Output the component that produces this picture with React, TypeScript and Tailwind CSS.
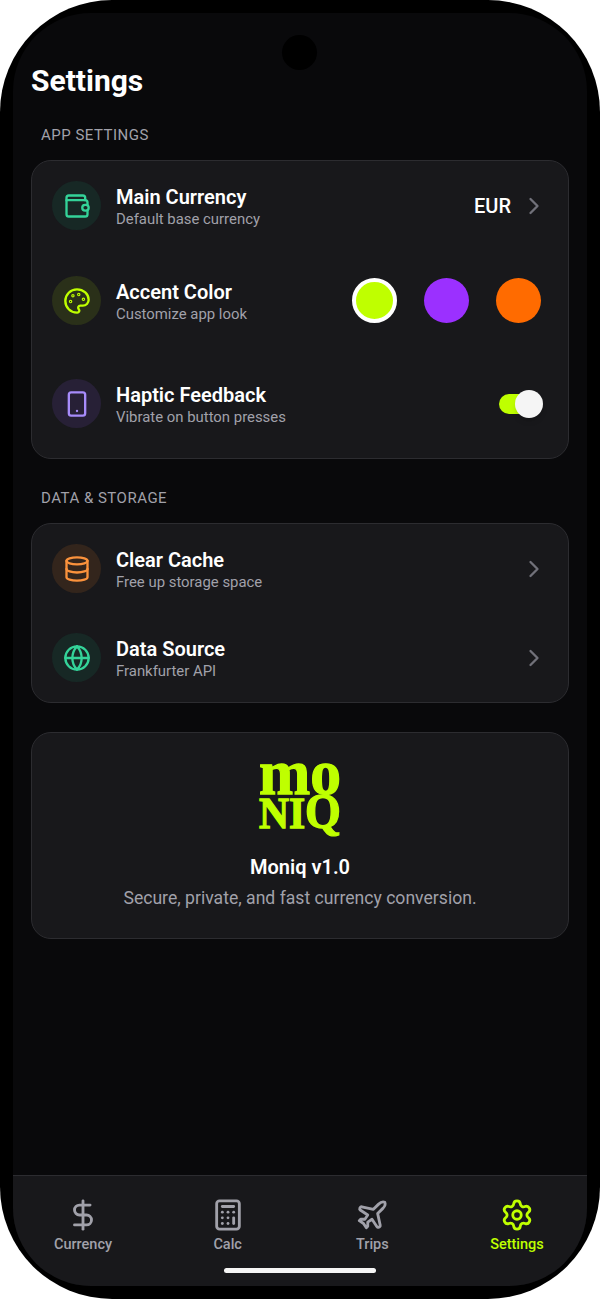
import React, { FC, ReactNode } from 'react';
import { Calculator, ChevronRight, Database, DollarSign, Globe, Palette, Plane, Settings, Smartphone } from 'lucide-react';

const WalletIcon = () => (
    <svg width="28" height="28" viewBox="0 0 24 24" fill="none" stroke="#34d399" strokeWidth="2" strokeLinecap="round" strokeLinejoin="round">
        <path d="M3 7h16a2 2 0 0 1 2 2v2" />
        <path d="M19 7V5a2 2 0 0 0-2-2H5a2 2 0 0 0-2 2v14a2 2 0 0 0 2 2h14a2 2 0 0 0 2-2v-3" />
        <rect x="16.5" y="11" width="5.5" height="5" rx="2.5" />
    </svg>
);

const Logo = () => (
    <svg
        className="overflow-visible"
        width="84"
        height="76"
        viewBox="0 0 84 76"
        fill="#bfff00"
        stroke="#bfff00"
        strokeWidth="1.3"
        fontFamily="'Liberation Serif', serif"
        fontWeight="700"
    >
        <text x="1" y="31" fontSize="64" textLength="82" lengthAdjust="spacingAndGlyphs">
            mo
        </text>
        <text x="1" y="65" fontSize="45" textLength="82" lengthAdjust="spacingAndGlyphs">
            NI<tspan fontSize="50">Q</tspan>
        </text>
    </svg>
);

interface RowProps {
    icon: ReactNode;
    iconBg: string;
    title: string;
    subtitle: string;
    className?: string;
    children?: ReactNode;
}
const Row: FC<RowProps> = ({ icon, iconBg, title, subtitle, className, children }) => (
    <div className={['flex items-center', className ?? ''].join(' ')}>
        <div className={['h-[49px] w-[49px] rounded-full flex items-center justify-center shrink-0', iconBg].join(' ')}>{icon}</div>
        <div className="ml-[15px] pt-[3px]">
            <div className="text-[20px] leading-[24px] font-semibold text-white">{title}</div>
            <div className="text-[14.9px] leading-[20px] text-[#a1a1aa]">{subtitle}</div>
        </div>
        <div className="ml-auto flex items-center">{children}</div>
    </div>
);

const Chevron = () => <ChevronRight size={28} color="#71717a" />;

const Label: FC<{ children: ReactNode }> = ({ children }) => (
    <div className="ml-[10px] text-[15px] leading-[20px] font-normal tracking-[0.5px] text-[#a1a1aa]">{children}</div>
);

const tabs = [
    { name: 'Currency', Icon: DollarSign },
    { name: 'Calc', Icon: Calculator },
    { name: 'Trips', Icon: Plane },
    { name: 'Settings', Icon: Settings },
];

const App = () => {
    return (
        <div className="w-[600px] h-[1300px] bg-white font-['Roboto',sans-serif]">
            <div className="relative h-[1299px] rounded-[112px] bg-black p-[13px]">
                {/* Camera hole */}
                <div className="absolute top-[35px] left-[282px] h-[35px] w-[35px] rounded-full bg-black" />

                <div className="h-full flex flex-col rounded-[78px] overflow-hidden bg-[#09090b]">
                    <main className="flex-1 px-[18px] pt-[48px]">
                        <h1 className="text-[30px] leading-[40px] font-bold text-white">Settings</h1>

                        <div className="mt-[24px]">
                            <Label>APP SETTINGS</Label>
                        </div>
                        <section className="mt-[15px] rounded-[20px] border border-[#2c2c30] bg-[#18181b] px-[20px] pt-[20px] pb-[29px]">
                            <Row icon={<WalletIcon />} iconBg="bg-[#172825]" title="Main Currency" subtitle="Default base currency">
                                <span className="text-[20px] font-medium text-white">EUR</span>
                                <span className="ml-[9px]">
                                    <Chevron />
                                </span>
                            </Row>
                            <Row
                                className="mt-[46px]"
                                icon={<Palette size={28} color="#bfff00" />}
                                iconBg="bg-[#2a3019]"
                                title="Accent Color"
                                subtitle="Customize app look"
                            >
                                <div className="flex items-center gap-[27px] pr-[7.5px]">
                                    <span className="h-[45px] w-[45px] rounded-full border-4 border-white bg-[#bfff00]" />
                                    <span className="h-[45px] w-[45px] rounded-full bg-[#9b30ff]" />
                                    <span className="h-[45px] w-[45px] rounded-full bg-[#ff6b00]" />
                                </div>
                            </Row>
                            <Row
                                className="mt-[54px] mb-[1px]"
                                icon={<Smartphone size={28} color="#a78bfa" />}
                                iconBg="bg-[#272036]"
                                title="Haptic Feedback"
                                subtitle="Vibrate on button presses"
                            >
                                <div className="relative mr-[5px] h-[28px] w-[44px] flex items-center">
                                    <div className="h-[20px] w-[36px] rounded-full bg-[#bfff00]" />
                                    <div className="absolute right-0 top-0 h-[28px] w-[28px] rounded-full bg-[#f5f5f5] shadow-md" />
                                </div>
                            </Row>
                        </section>

                        <div className="mt-[29px]">
                            <Label>DATA &amp; STORAGE</Label>
                        </div>
                        <section className="mt-[15px] rounded-[20px] border border-[#2c2c30] bg-[#18181b] px-[20px] pt-[20px] pb-[20px]">
                            <Row icon={<Database size={28} color="#fb923c" />} iconBg="bg-[#33251c]" title="Clear Cache" subtitle="Free up storage space">
                                <Chevron />
                            </Row>
                            <Row
                                className="mt-[40px]"
                                icon={<Globe size={28} color="#34d399" />}
                                iconBg="bg-[#172825]"
                                title="Data Source"
                                subtitle="Frankfurter API"
                            >
                                <Chevron />
                            </Row>
                        </section>

                        <section className="mt-[29px] h-[207px] rounded-[20px] border border-[#2c2c30] bg-[#18181b] flex flex-col items-center pt-[30px]">
                            <Logo />
                            <div className="mt-[16px] text-[20px] leading-[24px] font-semibold text-white">Moniq v1.0</div>
                            <div className="mt-[7px] text-[17.6px] leading-[24px] text-[#a1a1aa]">
                                Secure, private, and fast currency conversion.
                            </div>
                        </section>
                    </main>

                    <nav className="relative h-[111px] border-t border-[#2c2c30] bg-[#18181b] px-[20px] pt-[22px] flex justify-between">
                        {tabs.map((t) => (
                            <div
                                key={t.name}
                                className={[
                                    'w-[100px] flex flex-col items-center',
                                    t.name === 'Settings' ? 'text-[#bfff00]' : 'text-[#a1a1aa]',
                                ].join(' ')}
                            >
                                <t.Icon size={34} strokeWidth={2} />
                                <span className="mt-[4px] text-[14.5px] leading-[18px] font-medium">{t.name}</span>
                            </div>
                        ))}
                        {/* Home indicator */}
                        <div className="absolute left-[211px] bottom-[13px] h-[5px] w-[152px] rounded-full bg-[#f5f5f5]" />
                    </nav>
                </div>
            </div>
        </div>
    );
};

export default App;
